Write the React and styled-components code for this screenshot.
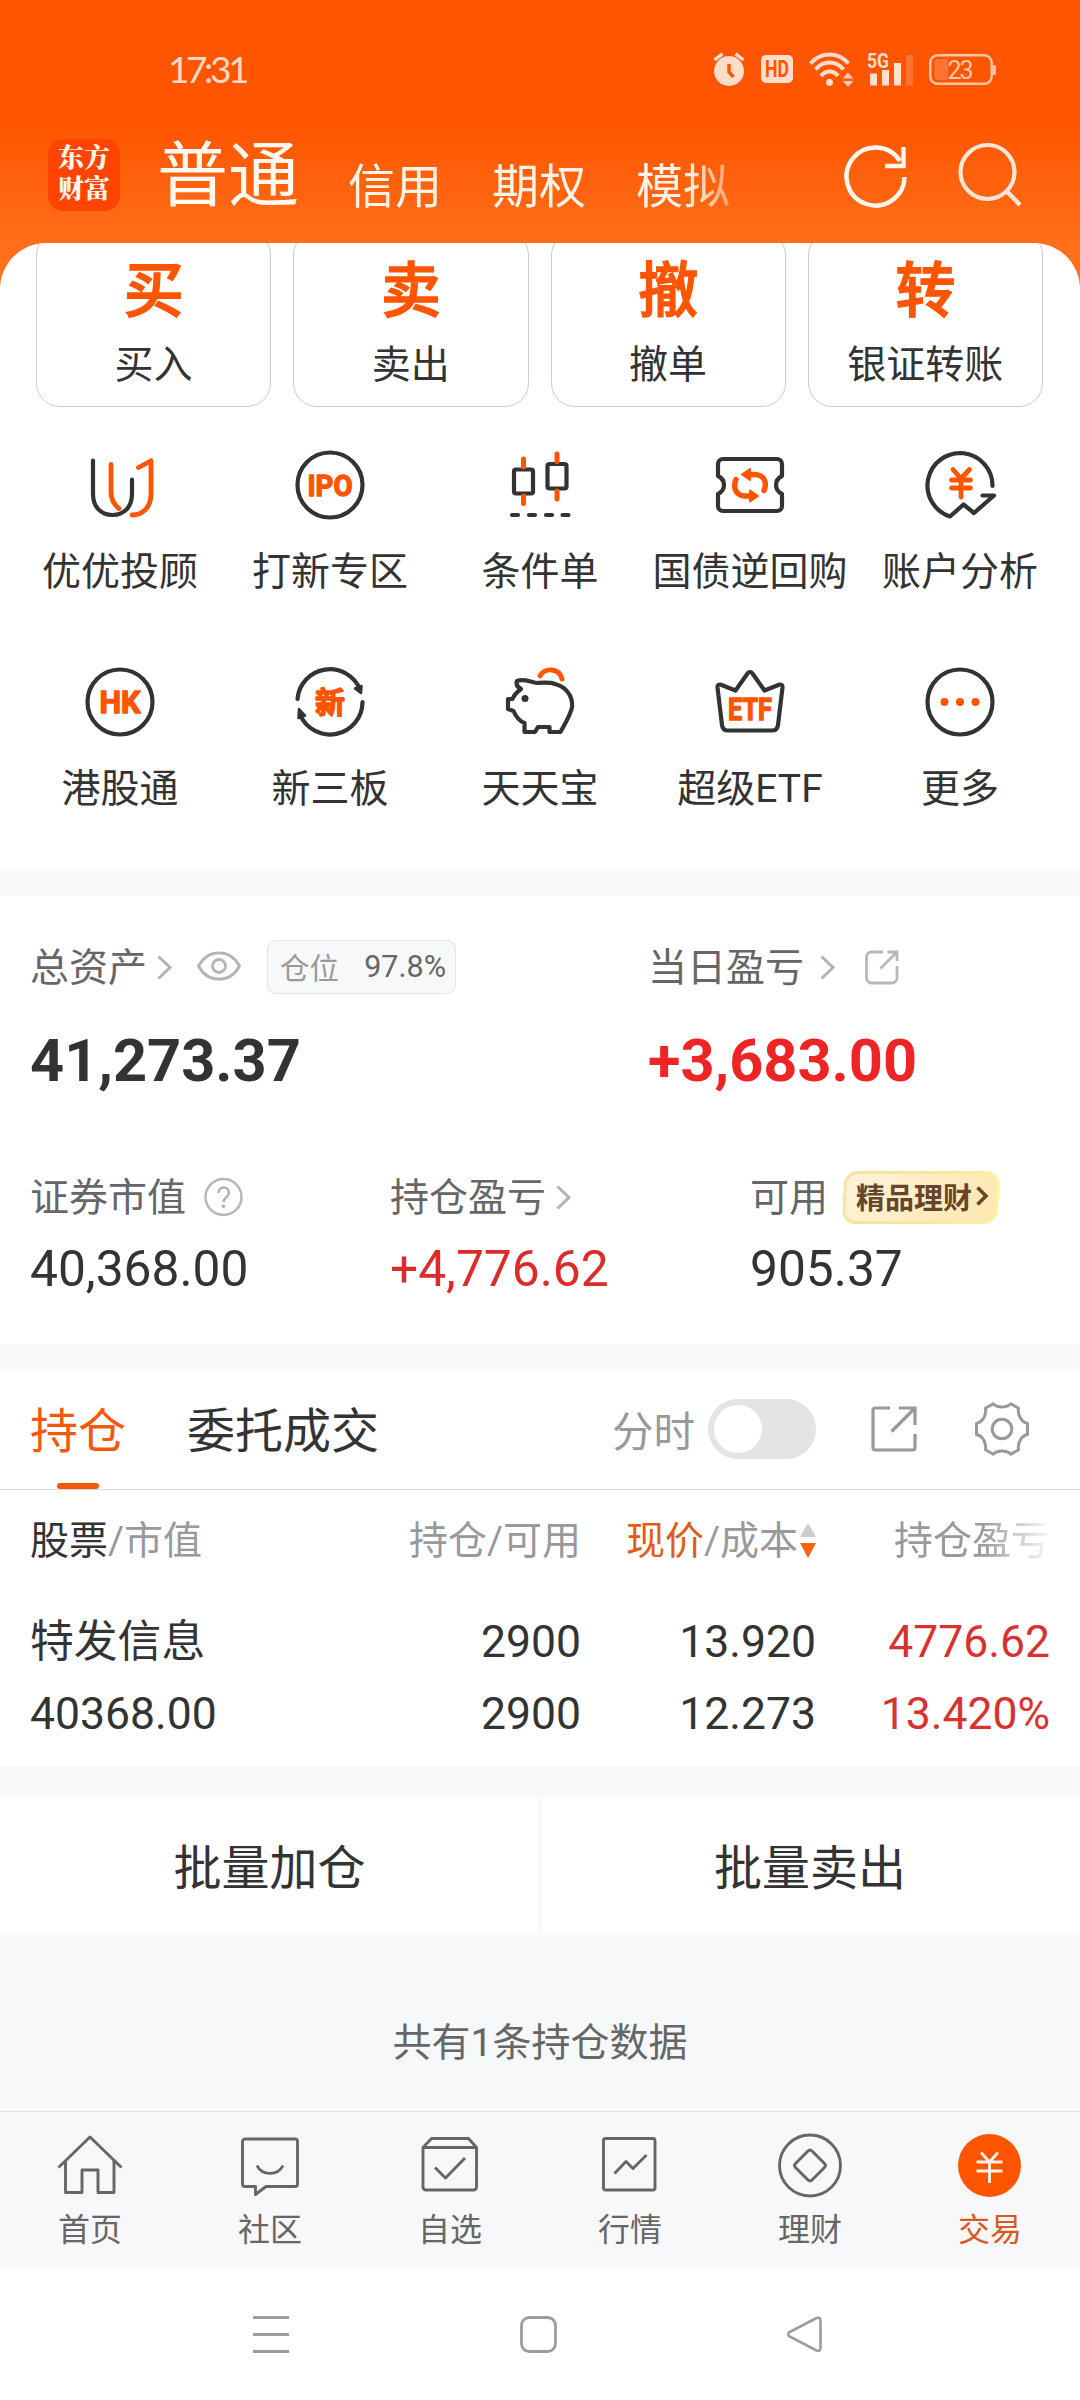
import React from "react";
import styled, { createGlobalStyle } from "styled-components";

const FONT = `Roboto, "Noto Sans CJK SC", sans-serif`;
const ORANGE = "#ff5500";
const INK = "#333333";

const GlobalStyle = createGlobalStyle`
  *, *::before, *::after { box-sizing: border-box; }
  body { margin: 0; background: #fff; font-family: ${FONT}; color: ${INK}; }
  svg { display: block; flex: none; overflow: visible; }
  svg text { font-family: ${FONT}; }
`;

const Screen = styled.div`
  width: 1080px;
  height: 2400px;
  overflow: hidden;
  display: flex;
  flex-direction: column;
  background: linear-gradient(180deg, #ff5500 0, #ff5500 122px, #ff6e1a 243px, #ff6e1a 300px, #fff 300px);
`;

/* ---------- status bar ---------- */
const StatusBar = styled.div`
  height: 138px;
  flex: none;
  display: flex;
  align-items: center;
  justify-content: space-between;
  padding: 0 84px 0 168px;
`;
const Clock = styled.span`
  font-family: Lato, ${FONT};
  font-size: 37px;
  line-height: 40px;
  letter-spacing: -3.4px;
  color: #ffd9c2;
`;
const StatusIcons = styled.div`
  display: flex;
  align-items: center;
`;

/* ---------- header ---------- */
const Header = styled.div`
  height: 105px;
  flex: none;
  display: flex;
  align-items: flex-start;
  padding-left: 48px;
`;
const Logo = styled.div`
  width: 72px;
  height: 72px;
  margin-top: 1px;
  border-radius: 15px;
  background: #ff4400;
  color: #fff6ec;
  font-family: Roboto, "Noto Serif CJK SC", "Noto Sans CJK SC", serif;
  font-weight: 900;
  font-size: 26px;
  padding: 4px 0 0 10px;
`;
const LogoLine = styled.div`
  height: 31px;
  line-height: 31px;
`;
const ActiveTab = styled.div`
  margin-left: 37px;
  font-size: 71px;
  line-height: 76px;
  color: #fff8f0;
  white-space: nowrap;
`;
const Tabs = styled.div`
  display: flex;
  gap: 50px;
  margin: 19px 0 0 49px;
  width: 396px;
  -webkit-mask-image: linear-gradient(90deg, #000 340px, rgba(0, 0, 0, 0.3) 392px);
  mask-image: linear-gradient(90deg, #000 340px, rgba(0, 0, 0, 0.3) 392px);
`;
const Tab = styled.span`
  font-size: 47px;
  line-height: 60px;
  color: #fff3e8;
  white-space: nowrap;
`;
const HeaderIcons = styled.div`
  display: flex;
  gap: 52px;
  margin: 6px 0 0 101px;
`;

/* ---------- quick actions ---------- */
const Panel = styled.div`
  flex: none;
  height: 628px;
  background: #fff;
  border-radius: 46px 46px 0 0;
  overflow: hidden;
`;
const Cards = styled.div`
  display: flex;
  gap: 22px;
  margin-top: -12px;
  padding: 0 37px 0 36px;
`;
const Card = styled.div`
  flex: 1;
  height: 176px;
  border: 1px solid #cccccc;
  border-radius: 24px;
  display: flex;
  flex-direction: column;
  align-items: center;
`;
const CardGlyph = styled.div`
  margin-top: 27px;
  font-size: 60px;
  font-weight: 500;
  line-height: 66px;
  color: ${ORANGE};
  -webkit-text-stroke: 1.4px ${ORANGE};
`;
const Label = styled.div`
  font-size: 39px;
  line-height: 46px;
  white-space: nowrap;
`;
const CardLabel = styled(Label)`
  margin-top: 17px;
`;
const Grid = styled.div`
  display: grid;
  grid-template-columns: repeat(5, 210px);
  row-gap: 34px;
  padding: 38px 15px 0;
`;
const Shortcut = styled.div`
  height: 183px;
  display: flex;
  flex-direction: column;
  align-items: center;
  gap: 24px;
`;

/* ---------- separators ---------- */
const Band = styled.div`
  flex: none;
  height: ${(p) => p.$h}px;
  background: #f7f8fa;
`;

/* ---------- assets ---------- */
const Assets = styled.section`
  flex: none;
  height: 450px;
  background: #fff;
  padding: 45px 30px 0;
`;
const AssetRow = styled.div`
  display: grid;
  grid-template-columns: ${(p) => p.$cols};
  margin-top: ${(p) => p.$mt || 0}px;
`;
const AssetHead = styled.div`
  display: flex;
  align-items: center;
  height: 54px;
  color: #666;
  ${Label} { padding-top: 2px; }
`;
const Gap = styled.i`
  width: ${(p) => p.$w}px;
  flex: none;
`;
const Big = styled.div`
  margin: 32px 0 -1px;
  font-size: 59.5px;
  font-weight: 700;
  line-height: 70px;
  color: ${(p) => (p.$up ? "#ef2424" : INK)};
`;
const Mid = styled.div`
  margin-top: 15px;
  font-size: 49.7px;
  line-height: 61px;
  color: ${(p) => (p.$up ? "#dc2b2b" : INK)};
`;
const Pill = styled.div`
  width: 189px;
  height: 54px;
  border: 1px solid #e3e4e6;
  border-radius: 9px;
  background: #f7f8fa;
  display: flex;
  align-items: center;
  justify-content: space-between;
  padding: 0 9px 1px 12px;
  font-size: 30.5px;
  color: #666;
`;
const PillName = styled.span`
  font-size: 29.5px;
  color: #999;
  padding-bottom: 2px;
`;
const Badge = styled.div`
  position: relative;
  width: 158px;
  height: 53px;
  display: flex;
  align-items: center;
  gap: 4px;
  padding: 0 0 2px 14px;
  font-size: 29px;
  font-weight: 700;
  color: #66452a;
  white-space: nowrap;
  z-index: 0;
  &::before {
    content: "";
    position: absolute;
    z-index: -1;
    inset: 0 1px;
    border: 3px solid transparent;
    border-radius: 14px;
    transform: skewX(-3deg);
    background: linear-gradient(120deg, #fff3da, #fde7ae) padding-box,
      linear-gradient(100deg, #f9e2a0 0%, #fbe59c 55%, #fdf5a0 100%) border-box;
  }
`;

/* ---------- positions ---------- */
const Toolbar = styled.div`
  flex: none;
  height: 121px;
  background: #fff;
  border-bottom: 1px solid #dddddd;
  display: flex;
  align-items: flex-start;
  padding: 0 51px 0 30px;
`;
const ToolTab = styled.div`
  height: 120px;
  margin-right: ${(p) => p.$mr || 0}px;
  display: flex;
  flex-direction: column;
  align-items: center;
  justify-content: space-between;
  padding-top: 33px;
  font-size: 48px;
  line-height: 60px;
  color: ${(p) => (p.$on ? "#f2590d" : INK)};
  &::after {
    content: "";
    width: 42px;
    height: 6px;
    border-radius: 3px;
    background: ${(p) => (p.$on ? "#f2590d" : "transparent")};
  }
`;
const ToolRight = styled.div`
  margin-left: auto;
  height: 120px;
  display: flex;
  align-items: center;
  font-size: 41.5px;
  color: #999;
`;
const Switch = styled.div`
  width: 108px;
  height: 60px;
  margin: 0 55px 0 13px;
  border-radius: 30px;
  background: #e4e4e6;
  padding: 6px;
  &::after {
    content: "";
    display: block;
    width: 48px;
    height: 48px;
    border-radius: 50%;
    background: #fff;
  }
`;
const Table = styled.div`
  flex: none;
  height: 276px;
  background: #fff;
  padding: 21px 30px 0;
`;
const Row = styled.div`
  display: grid;
  grid-template-columns: 250px 301px 235px 1fr;
  height: ${(p) => p.$h}px;
  font-size: ${(p) => p.$size}px;
  line-height: 60px;
  text-align: right;
  color: ${(p) => p.$color || INK};
  & > :first-child { text-align: left; }
`;
const Tone = styled.span`
  color: ${(p) => p.$c};
`;
const StockName = styled.span`
  font-size: 43.8px;
`;
const SortCell = styled.span`
  display: flex;
  justify-content: flex-end;
  align-items: center;
  gap: 2px;
  height: 60px;
`;
const FadeCell = styled.span`
  -webkit-mask-image: linear-gradient(90deg, #000 165px, rgba(0, 0, 0, 0.12) 230px);
  mask-image: linear-gradient(90deg, #000 165px, rgba(0, 0, 0, 0.12) 230px);
`;

/* ---------- batch ---------- */
const Batch = styled.div`
  flex: none;
  height: 138px;
  background: #fff;
  display: grid;
  grid-template-columns: 539px 541px;
`;
const BatchButton = styled.div`
  font-size: 48px;
  line-height: 144px;
  text-align: center;
  & + & { border-left: 1px solid #f2f2f3; }
`;
const Summary = styled.div`
  flex: none;
  height: 176px;
  background: #f7f8fa;
  padding-top: 79px;
  text-align: center;
  font-size: 39px;
  line-height: 58px;
  color: #666;
`;

/* ---------- bottom bars ---------- */
const TabBar = styled.nav`
  flex: none;
  height: 157px;
  background: #f8f8fa;
  border-top: 1px solid #e1e2e4;
  display: flex;
`;
const TabItem = styled.div`
  flex: 1;
  display: flex;
  flex-direction: column;
  align-items: center;
  gap: 10px;
  padding-top: 17px;
  font-size: 32px;
  line-height: 42px;
  color: ${(p) => (p.$on ? "#d9581a" : "#666")};
`;
const SystemNav = styled.div`
  flex: 1;
  background: #fff;
  display: flex;
  justify-content: space-between;
  align-items: center;
  padding: 0 257px 0 253px;
`;

/* ---------- icons ---------- */
const AlarmIcon = () => (
  <svg width="32" height="34" viewBox="0 0 32 34">
    <circle cx="16" cy="19" r="15" fill="#ffddca" />
    <path d="M1.5 8 9.5 1.8M30.5 8 22.5 1.8" stroke="#ffddca" strokeWidth="3.4" />
    <path d="M16 12v8l4.5 5" stroke="#ff5500" strokeWidth="3.4" fill="none" />
  </svg>
);
const HdIcon = () => (
  <svg width="32" height="28" viewBox="0 0 32 28">
    <rect width="32" height="28" rx="5" fill="#ffddca" />
    <text x="16" y="22" textAnchor="middle" fontSize="23" fontWeight="700" fill="#ff5500" textLength="24" lengthAdjust="spacingAndGlyphs">HD</text>
  </svg>
);
const WifiIcon = () => (
  <svg width="45" height="34" viewBox="0 0 45 34">
    <g fill="none" stroke="#ffddca" strokeWidth="4">
      <path d="M1.5 11.5C12 -.5 29 -.5 39.5 11.5" />
      <path d="M6.5 17.5C14 8 27 8 34.500 17.5" />
      <path d="M12 24C16.500 18 24.500 18 29 24" />
    </g>
    <circle cx="20.500" cy="30.500" r="3.400" fill="#ffddca" />
    <path d="M33.500 26.500 39 20.500l5.500 6zM33.500 29h11l-5.500 6z" fill="#ffcbb0" />
  </svg>
);
const SignalIcon = () => (
  <svg width="46" height="34" viewBox="0 0 46 34">
    <text x="0" y="15.500" fontSize="21" fontWeight="700" fill="#ffddca" textLength="22" lengthAdjust="spacingAndGlyphs">5G</text>
    <path d="M3 21.500h7v12H3zM15 18h7v15.500h-7zM27 11h7v22.500h-7z" fill="#ffe0cf" />
    <path d="M39 3h7v30.500h-7z" fill="#ff7433" />
  </svg>
);
const BatteryIcon = () => (
  <svg width="67" height="31" viewBox="0 0 67 31">
    <rect x="1.200" y="1.200" width="61.500" height="28.600" rx="7.500" fill="none" stroke="#ffc7a8" strokeWidth="2.400" />
    <path d="M5.500 9a4 4 0 0 1 4-4H19v21H9.500a4 4 0 0 1-4-4z" fill="#ff7433" />
    <rect x="64" y="11" width="2.800" height="10" rx="1" fill="#ffc7a8" />
    <text x="31.500" y="24.500" textAnchor="middle" fontSize="25" fill="#ffc7a8" textLength="26">23</text>
  </svg>
);
const RefreshIcon = () => (
  <svg width="62" height="64" viewBox="0 0 62 64">
    <g fill="none" stroke="#fff6ee" strokeWidth="4.400">
      <path d="M59.500 33A29 29 0 1 1 55 17" />
      <path d="M58.500 3V22H40" />
    </g>
  </svg>
);
const SearchIcon = () => (
  <svg width="63" height="65" viewBox="0 0 63 65">
    <circle cx="28.500" cy="28" r="27" fill="none" stroke="#ffe7d8" strokeWidth="4.200" />
    <path d="M47.500 47 61 61" stroke="#ffe7d8" strokeWidth="4.400" />
  </svg>
);

const Box = ({ children }) => (
  <svg width="80" height="80" viewBox="0 0 80 80" fill="none" stroke={INK} strokeWidth="4.200" strokeLinecap="round" strokeLinejoin="round">
    {children}
  </svg>
);
const Word = ({ y, size, w, children }) => (
  <text x="40" y={y} fontSize={size} fontWeight="700" textAnchor="middle" fill={ORANGE} stroke={ORANGE} strokeWidth="1.400" textLength={w} lengthAdjust="spacingAndGlyphs">
    {children}
  </text>
);
const AdvisorIcon = () => (
  <Box>
    <path d="M13 15.500V49c0 13 8 21 19.500 21S52 62 52 49V34.500" />
    <g stroke={ORANGE} strokeWidth="4.800">
      <path d="M31 19.500V47c0 9 3.500 13 8 16.500" />
      <path d="M58.500 22.500 71 15.800V49c0 13-8 21-19 21" />
    </g>
  </Box>
);
const IpoIcon = () => (
  <Box>
    <circle cx="40" cy="40" r="32.500" />
    <Word y="51" size="30" w="45">IPO</Word>
  </Box>
);
const CandleIcon = () => (
  <Box>
    <rect x="14" y="24.500" width="19" height="24" rx="2" />
    <rect x="47.500" y="19" width="19" height="24.500" rx="2" />
    <path d="M23.500 14v8M23.500 51v7.500M57 9v7.500M57 46v8" stroke={ORANGE} strokeWidth="5" />
    <path d="M12 70h6M29 70h6M46 70h6M62.500 70h6" />
  </Box>
);
const BondIcon = () => (
  <Box>
    <path d="M13 14H67a5 5 0 0 1 5 5V31C64 35 64 45 72 49V61a5 5 0 0 1-5 5H13a5 5 0 0 1-5-5V49C16 45 16 35 8 31V19a5 5 0 0 1 5-5Z" />
    <path d="M41 29.500H45C54 30 57.500 37 54 45.500M26 34.500C22.500 43 26 50.500 35 51H39" stroke={ORANGE} strokeWidth="5.500" />
    <path d="M32 29.500 40 24v11ZM48 51l-8-5.500v11Z" fill={ORANGE} stroke={ORANGE} strokeWidth="2" />
  </Box>
);
const AnalysisIcon = () => (
  <Box>
    <path d="M72.500 41A32.500 32.500 0 1 0 30 71.500L43.500 59.500 54 68 74 50.500H62.500" />
    <path d="M33 24.500 41 33.500 49.500 24.500M41 33.500V52M31.500 35H50.500M31.500 43H50.500" stroke={ORANGE} strokeWidth="4.800" />
  </Box>
);
const HkIcon = () => (
  <Box>
    <circle cx="40" cy="40" r="32.500" />
    <Word y="51" size="31" w="41">HK</Word>
  </Box>
);
const NewIcon = () => (
  <Box>
    <path d="M7.500 37A32.500 32.500 0 0 1 70 27.500M72.500 40A32.500 32.500 0 0 1 10 52.500" />
    <path d="M65 26.500 71.500 24 71 31ZM15 53.500 8.500 56 9 47Z" fill={INK} strokeWidth="2.500" />
    <Word y="51" size="30" w="30">新</Word>
  </Box>
);
const PigIcon = () => (
  <Box>
    <path d="M17 19C24 16 30 20 37 21 45 20.500 50 20 55 22 67 25 73 35 72 45 71 52 66 60 60.500 70H49.500V65H38L35 70H24.500V61C19 59 16 55 13.500 49L8 47V37H12.500C14 33 17 30 21 27 17 25 16 22 17 19Z" />
    <circle cx="25" cy="36.500" r="3.500" fill={INK} stroke="none" />
    <path d="M40 14C45 5.500 59 5.500 62 17" stroke={ORANGE} strokeWidth="4.800" />
  </Box>
);
const EtfIcon = () => (
  <Box>
    <path d="M7.500 25.500C7.300 23 9 22 11 22.800L25.500 28.500 37.500 11.500C39 9.500 41 9.500 42.500 11.500L54.500 28.500 69 22.800C71 22 72.700 23 72.500 25.500L68 63C67.600 66.500 65.500 68.500 62 68.500H18C14.500 68.500 12.400 66.500 12 63Z" />
    <Word y="58" size="31" w="44">ETF</Word>
  </Box>
);
const MoreIcon = () => (
  <Box>
    <circle cx="40" cy="40" r="32.500" />
    <g fill={ORANGE} stroke="none">
      <circle cx="24.500" cy="40" r="4" />
      <circle cx="40" cy="40" r="4" />
      <circle cx="55.500" cy="40" r="4" />
    </g>
  </Box>
);

const Chevron = () => (
  <svg width="15" height="25" viewBox="0 0 15 25">
    <path d="M1.500 1.500 13 12.500 1.500 23.500" fill="none" stroke="#b3b3b3" strokeWidth="3" />
  </svg>
);
const EyeIcon = () => (
  <svg width="44" height="30" viewBox="0 0 44 30" fill="none" stroke="#b3b3b3" strokeWidth="2.800">
    <path d="M1.500 14C11-3.500 33-3.500 42.500 14 33 31.500 11 31.500 1.500 14Z" />
    <circle cx="22" cy="14" r="6.500" />
  </svg>
);
const ShareSmall = () => (
  <svg width="34" height="35" viewBox="0 0 34 35" fill="none" stroke="#b8b8b8" strokeWidth="2.800">
    <path d="M18 2H6.500A5 5 0 0 0 1.500 7V28a5 5 0 0 0 5 5H27a5 5 0 0 0 5-5V16M22.500 2H32V11M32 2 15.500 18.500" />
  </svg>
);
const HelpIcon = () => (
  <svg width="39" height="39" viewBox="0 0 39 39">
    <circle cx="19.500" cy="19" r="18" fill="none" stroke="#b8b8b8" strokeWidth="2.500" />
    <path d="M14.500 15C14.500 7.500 25 8 25 15 25 19 19.500 19 19.500 24" fill="none" stroke="#b0b0b0" strokeWidth="2.500" />
    <circle cx="19.500" cy="28.300" r="1.800" fill="#b0b0b0" />
  </svg>
);
const ShareLarge = () => (
  <svg width="46" height="46" viewBox="0 0 46 46" fill="none" stroke="#999" strokeWidth="3.200">
    <path d="M19 2H4.500A2.500 2.500 0 0 0 2 4.500V41.500A2.500 2.500 0 0 0 4.500 44H41.500A2.500 2.500 0 0 0 44 41.500V28M28 2H44V19M43.500 2.500 20.500 25.500" />
  </svg>
);
const GearIcon = () => (
  <svg width="54" height="54" viewBox="0 0 54 54" fill="none" stroke="#999" strokeWidth="3" strokeLinejoin="round">
    <path d="M18.200 1.800C22 6 32 6 35.800 1.800L43.500 6.300C42.500 13 46 20 52.500 21.500V32.500C46 34 42.500 41 43.500 47.700L35.800 52.200C32 48 22 48 18.200 52.200L10.500 47.700C11.500 41 8 34 1.500 32.500V21.500C8 20 11.500 13 10.500 6.300Z" />
    <circle cx="27" cy="27" r="9.800" />
  </svg>
);
const SortIcon = () => (
  <svg width="16" height="36" viewBox="0 0 16 36">
    <path d="M0 14 8 0l8 14z" fill="#cccccc" />
    <path d="M0 20h16l-8 15z" fill="#ff6010" />
  </svg>
);
const BadgeChevron = () => (
  <svg width="12" height="20" viewBox="0 0 12 20">
    <path d="M1.500 1.500 10 10 1.500 18.500" fill="none" stroke="#66452a" strokeWidth="3.600" />
  </svg>
);

const TabSvg = ({ children }) => (
  <svg width="66" height="70" viewBox="0 0 66 70" fill="none" stroke="#666" strokeWidth="2.900" strokeLinejoin="round">
    {children}
  </svg>
);
const HomeIcon = () => (
  <TabSvg>
    <path d="M1.500 38.500 33 8 64.500 38.500M8.500 32V63.500H25V41H41V63.500H57V32" />
  </TabSvg>
);
const CommunityIcon = () => (
  <TabSvg>
    <path d="M8 10H58A2.500 2.500 0 0 1 60.500 12.500V55A2.500 2.500 0 0 1 58 57.500H29L18.500 65.500V57.500H8A2.500 2.500 0 0 1 5.500 55V12.500A2.500 2.500 0 0 1 8 10ZM20 36.500C25 47 41 47 46 36.500" />
  </TabSvg>
);
const WatchIcon = () => (
  <TabSvg>
    <path d="M6 18.500 14.500 9.500H51.500L59.500 18.500V58A3 3 0 0 1 56.500 61H9A3 3 0 0 1 6 58ZM6 18.500H59.500M18 38.500 28.500 49 48 29" />
  </TabSvg>
);
const MarketIcon = () => (
  <TabSvg>
    <rect x="6.500" y="9.500" width="51.500" height="51.500" rx="2" />
    <path d="M17.500 44.500 29 32.500 36 39.500 49.500 26" />
  </TabSvg>
);
const WealthIcon = () => (
  <TabSvg>
    <circle cx="33" cy="36.500" r="30.500" />
    <path d="M31 22Q33 20 35 22L47.500 34.500Q49.500 36.500 47.500 38.500L35 51Q33 53 31 51L18.500 38.500Q16.500 36.500 18.500 34.500Z" />
  </TabSvg>
);
const TradeIcon = () => (
  <TabSvg>
    <circle cx="32.500" cy="36.500" r="31.500" fill={ORANGE} stroke="none" />
    <path d="M24 23.500 32.500 33 41 23.500M32.500 33V54M19.500 33H45.500M19.500 42H45.500" stroke="#fff1e6" />
  </TabSvg>
);

const cards = [
  ["买", "买入"],
  ["卖", "卖出"],
  ["撤", "撤单"],
  ["转", "银证转账"],
];
const shortcuts = [
  [AdvisorIcon, "优优投顾"],
  [IpoIcon, "打新专区"],
  [CandleIcon, "条件单"],
  [BondIcon, "国债逆回购"],
  [AnalysisIcon, "账户分析"],
  [HkIcon, "港股通"],
  [NewIcon, "新三板"],
  [PigIcon, "天天宝"],
  [EtfIcon, "超级ETF"],
  [MoreIcon, "更多"],
];
const tabs = [
  [HomeIcon, "首页"],
  [CommunityIcon, "社区"],
  [WatchIcon, "自选"],
  [MarketIcon, "行情"],
  [WealthIcon, "理财"],
  [TradeIcon, "交易"],
];

export default function App() {
  return (
    <Screen>
      <GlobalStyle />
      <StatusBar>
        <Clock>17:31</Clock>
        <StatusIcons>
          <AlarmIcon />
          <Gap $w={16} />
          <HdIcon />
          <Gap $w={16} />
          <WifiIcon />
          <Gap $w={13} />
          <SignalIcon />
          <Gap $w={16} />
          <BatteryIcon />
        </StatusIcons>
      </StatusBar>

      <Header>
        <Logo>
          <LogoLine>东方</LogoLine>
          <LogoLine>财富</LogoLine>
        </Logo>
        <ActiveTab>普通</ActiveTab>
        <Tabs>
          <Tab>信用</Tab>
          <Tab>期权</Tab>
          <Tab>模拟</Tab>
        </Tabs>
        <HeaderIcons>
          <RefreshIcon />
          <SearchIcon />
        </HeaderIcons>
      </Header>

      <Panel>
        <Cards>
          {cards.map(([glyph, name]) => (
            <Card key={name}>
              <CardGlyph>{glyph}</CardGlyph>
              <CardLabel>{name}</CardLabel>
            </Card>
          ))}
        </Cards>
        <Grid>
          {shortcuts.map(([Icon, name]) => (
            <Shortcut key={name}>
              <Icon />
              <Label>{name}</Label>
            </Shortcut>
          ))}
        </Grid>
      </Panel>

      <Band $h={24} />

      <Assets>
        <AssetRow $cols="618px 1fr">
          <div>
            <AssetHead>
              <Label>总资产</Label>
              <Gap $w={10} />
              <Chevron />
              <Gap $w={25} />
              <EyeIcon />
              <Gap $w={26} />
              <Pill>
                <PillName>仓位</PillName>
                <span>97.8%</span>
              </Pill>
            </AssetHead>
            <Big>41,273.37</Big>
          </div>
          <div>
            <AssetHead>
              <Label>当日盈亏</Label>
              <Gap $w={16} />
              <Chevron />
              <Gap $w={30} />
              <ShareSmall />
            </AssetHead>
            <Big $up>+3,683.00</Big>
          </div>
        </AssetRow>
        <AssetRow $cols="360px 360px 1fr" $mt={75}>
          <div>
            <AssetHead>
              <Label>证券市值</Label>
              <Gap $w={18} />
              <HelpIcon />
            </AssetHead>
            <Mid>40,368.00</Mid>
          </div>
          <div>
            <AssetHead>
              <Label>持仓盈亏</Label>
              <Gap $w={10} />
              <Chevron />
            </AssetHead>
            <Mid $up>+4,776.62</Mid>
          </div>
          <div>
            <AssetHead>
              <Label>可用</Label>
              <Gap $w={14} />
              <Badge>
                精品理财
                <BadgeChevron />
              </Badge>
            </AssetHead>
            <Mid>905.37</Mid>
          </div>
        </AssetRow>
      </Assets>

      <Band $h={24} />

      <Toolbar>
        <ToolTab $on $mr={61}>持仓</ToolTab>
        <ToolTab>委托成交</ToolTab>
        <ToolRight>
          分时
          <Switch />
          <ShareLarge />
          <Gap $w={58} />
          <GearIcon />
        </ToolRight>
      </Toolbar>

      <Table>
        <Row $size={39} $h={101} $color="#999">
          <span><Tone $c={INK}>股票</Tone>/市值</span>
          <span>持仓/可用</span>
          <SortCell>
            <span><Tone $c="#e25c18">现价</Tone>/成本</span>
            <SortIcon />
          </SortCell>
          <FadeCell>持仓盈亏</FadeCell>
        </Row>
        <Row $size={44.5} $h={72}>
          <StockName>特发信息</StockName>
          <span>2900</span>
          <span>13.920</span>
          <Tone $c="#d93030">4776.62</Tone>
        </Row>
        <Row $size={44.5} $h={72}>
          <span>40368.00</span>
          <span>2900</span>
          <span>12.273</span>
          <Tone $c="#d93030">13.420%</Tone>
        </Row>
      </Table>

      <Band $h={31} />

      <Batch>
        <BatchButton>批量加仓</BatchButton>
        <BatchButton>批量卖出</BatchButton>
      </Batch>
      <Summary>共有1条持仓数据</Summary>

      <TabBar>
        {tabs.map(([Icon, name], i) => (
          <TabItem key={name} $on={i === 5}>
            <Icon />
            {name}
          </TabItem>
        ))}
      </TabBar>

      <SystemNav>
        <svg width="36" height="37" viewBox="0 0 36 37">
          <path d="M0 1.500h36M0 18.500h36M0 35.500h36" stroke="#9c9c9c" strokeWidth="3" />
        </svg>
        <svg width="37" height="37" viewBox="0 0 37 37">
          <rect x="1.500" y="1.500" width="34" height="34" rx="8" fill="none" stroke="#9c9c9c" strokeWidth="2.800" />
        </svg>
        <svg width="36" height="37" viewBox="0 0 36 37">
          <path d="M29.500 2 2.500 16Q0 18.500 2.500 20.500L29.500 34.500Q33.500 35.500 33.500 32V4.500Q33.500 1 29.500 2Z" fill="none" stroke="#9c9c9c" strokeWidth="2.600" />
        </svg>
      </SystemNav>
    </Screen>
  );
}
